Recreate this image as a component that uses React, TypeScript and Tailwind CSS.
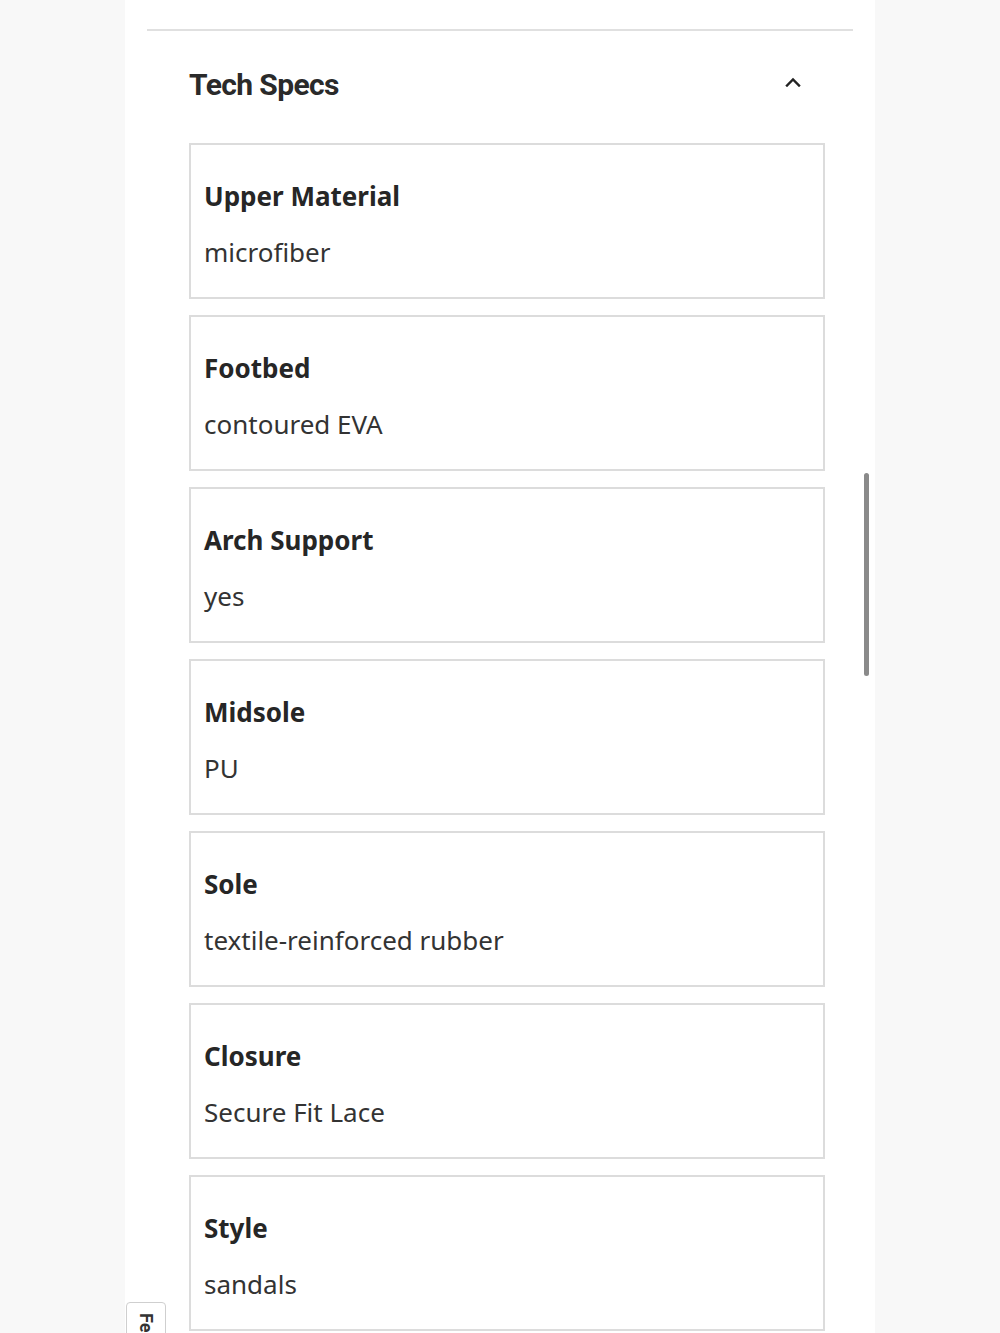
import React from "react";

const specs = [
  { label: "Upper Material", value: "microfiber" },
  { label: "Footbed", value: "contoured EVA" },
  { label: "Arch Support", value: "yes" },
  { label: "Midsole", value: "PU" },
  { label: "Sole", value: "textile-reinforced rubber" },
  { label: "Closure", value: "Secure Fit Lace" },
  { label: "Style", value: "sandals" },
];

export default function App() {
  return (
    <div className="relative min-h-[1333px] h-[1333px] overflow-hidden bg-[#f8f8f8] flex justify-center" style={{ fontFamily: '"Noto Sans", "Open Sans", sans-serif' }}>
      <div className="relative w-[750px] bg-white pt-[29px]">
        <div className="h-[2px] bg-[#e0e0e0] mx-[22px]" />
        <div className="h-[112px] flex items-center justify-between pl-[64px] pr-[74px] pb-[6px]">
          <h2 className="text-[30px] font-bold text-[#2a2a2a] tracking-[-0.6px]" style={{ fontFamily: 'Roboto, "Noto Sans", sans-serif' }}>
            Tech Specs
          </h2>
          <svg width="16" height="10" viewBox="0 0 16 10" fill="none" className="mt-[-4px]">
            <path d="M2 8.5 L8 2.5 L14 8.5" stroke="#222" strokeWidth="2.4" strokeLinecap="square" />
          </svg>
        </div>
        <div className="ml-[64px] mr-[50px] flex flex-col gap-4">
          {specs.map((s) => (
            <div key={s.label} className="h-[156px] border-2 border-[#dcdcdc] pl-[13px] pt-[35px]">
              <div className="text-[26px] leading-[32px] font-bold text-[#262626]">{s.label}</div>
              <div className="mt-[24px] text-[26px] leading-[32px] text-[#333333]">{s.value}</div>
            </div>
          ))}
        </div>
        <div className="absolute left-[739px] top-[473px] w-[5px] h-[203px] rounded-full bg-[#8a8a8a]" />
        <div className="absolute left-[1px] top-[1302px] w-[40px] h-[60px] bg-white border border-[#cfcfcf] rounded-t-[4px] flex justify-center pt-[10px]">
          <span className="text-[18px] font-bold text-[#333] leading-none" style={{ writingMode: "vertical-rl", fontFamily: 'Roboto, sans-serif' }}>
            Feedback
          </span>
        </div>
      </div>
    </div>
  );
}
